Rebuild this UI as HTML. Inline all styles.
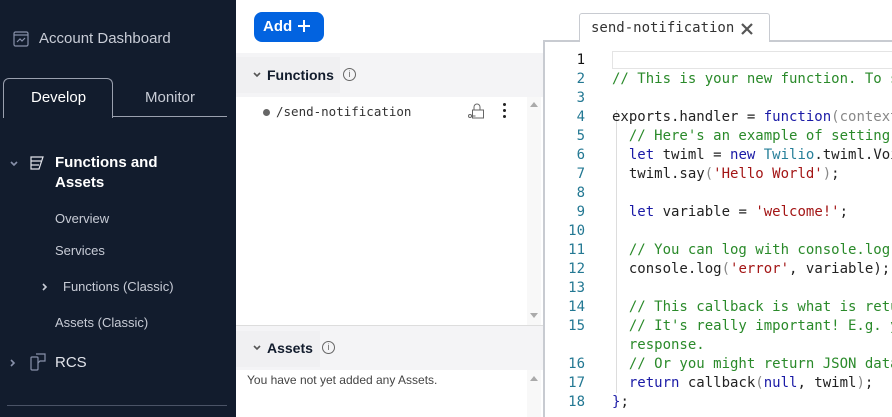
<!DOCTYPE html>
<html><head><meta charset="utf-8"><style>
*{margin:0;padding:0;box-sizing:border-box}
body{width:892px;height:417px;overflow:hidden;background:#fff;font-family:"Liberation Sans",sans-serif;position:relative}
.sb{position:absolute;left:0;top:0;width:236px;height:417px;background:#121c2d;color:#e1e3ea}
.abs{position:absolute}
.mono{font-family:"DejaVu Sans Mono",monospace}
.code{position:absolute;left:543px;top:40px;width:349px;height:377px;border-left:2px solid #c8cbd1;border-top:2px solid #c8cbd1;background:#fff}
.ln{position:absolute;left:543px;width:42px;text-align:right;font:14px "DejaVu Sans Mono",monospace;color:#237893}
.cl{position:absolute;left:612px;font:14px "DejaVu Sans Mono",monospace;color:#222;white-space:pre}
.c{color:#2a8a2a}.k{color:#1a1aa6}.s{color:#a31515}.g{color:#888}
</style></head><body>
<div class="sb">
 <svg class="abs" style="left:13px;top:31px" width="16" height="16" viewBox="0 0 16 16" fill="none" stroke="#8891aa" stroke-width="1.2"><rect x="1" y="1" width="14" height="14" rx="1.5"/><line x1="1" y1="4" x2="15" y2="4"/><path d="M4 11l3-3 2 2 3-3"/></svg>
 <div class="abs" style="left:39px;top:30px;font-size:15px;color:#c8ccd6">Account Dashboard</div>
 <div class="abs" style="left:3px;top:78px;width:110px;height:40px;border:1px solid #9aa0ae;border-bottom:none;border-radius:6px 6px 0 0"></div>
 <div class="abs" style="left:113px;top:116px;width:114px;border-top:1px solid #9aa0ae"></div>
 <div class="abs" style="left:31px;top:89px;font-size:15px;color:#fff">Develop</div>
 <div class="abs" style="left:145px;top:89px;font-size:15px;color:#c8ccd6">Monitor</div>
 <svg class="abs" style="left:9px;top:160px" width="10" height="8" viewBox="0 0 10 8" fill="none" stroke="#8891aa" stroke-width="1.6"><path d="M2 2l3 3 3-3"/></svg>
 <svg class="abs" style="left:29px;top:155px" width="16" height="16" viewBox="0 0 16 16" fill="none" stroke="#e1e3ea" stroke-width="1.2"><path d="M2 2h12l-4 12H2z M2 6h10 M2 10h8"/></svg>
 <div class="abs" style="left:55px;top:153px;font-size:15px;font-weight:bold;color:#fff;line-height:20px">Functions and<br>Assets</div>
 <div class="abs" style="left:55px;top:211px;font-size:13px;color:#c8ccd6">Overview</div>
 <div class="abs" style="left:55px;top:243px;font-size:13px;color:#c8ccd6">Services</div>
 <svg class="abs" style="left:41px;top:282px" width="8" height="10" viewBox="0 0 8 10" fill="none" stroke="#c8ccd6" stroke-width="1.6"><path d="M2 2l3 3-3 3"/></svg>
 <div class="abs" style="left:63px;top:279px;font-size:13px;color:#c8ccd6">Functions (Classic)</div>
 <div class="abs" style="left:55px;top:315px;font-size:13px;color:#c8ccd6">Assets (Classic)</div>
 <svg class="abs" style="left:9px;top:358px" width="8" height="10" viewBox="0 0 8 10" fill="none" stroke="#8891aa" stroke-width="1.6"><path d="M2 2l3 3-3 3"/></svg>
 <svg class="abs" style="left:30px;top:353px" width="16" height="18" viewBox="0 0 16 18" fill="none" stroke="#8891aa" stroke-width="1.2"><rect x="1" y="4" width="7" height="13" rx="1"/><path d="M6 1h9v7H10l-2 2"/></svg>
 <div class="abs" style="left:55px;top:354px;font-size:15px;color:#e1e3ea">RCS</div>
 <div class="abs" style="left:7px;top:405px;width:220px;border-top:1px solid #4a5366"></div>
</div>
<div class="abs" style="left:254px;top:12px;width:70px;height:30px;background:#0263e0;border-radius:8px;color:#fff;font-size:15px;font-weight:bold;padding:6px 0 0 9px">Add</div>
<svg class="abs" style="left:297px;top:19px" width="14" height="14" viewBox="0 0 14 14" stroke="#fff" stroke-width="2"><path d="M7 1v12M1 7h12"/></svg>
<div class="abs" style="left:236px;top:53px;width:307px;height:44px;background:#f4f4f6"></div>
<div class="abs" style="left:236px;top:57px;width:104px;height:36px;background:#f0f0f2"></div>
<svg class="abs" style="left:252px;top:71px" width="10" height="8" viewBox="0 0 10 8" fill="none" stroke="#555" stroke-width="1.6"><path d="M2 2l3 3 3-3"/></svg>
<div class="abs" style="left:267px;top:67px;font-size:14px;font-weight:bold;color:#121c2d">Functions</div>
<div class="abs" style="left:343px;top:68px;width:13px;height:13px;border:1px solid #666;border-radius:50%;font-size:9px;text-align:center;line-height:11px;color:#666">i</div>
<div class="abs" style="left:263px;top:109px;width:7px;height:7px;border-radius:50%;background:#666"></div>
<div class="abs mono" style="left:276px;top:104px;font-size:12.5px;color:#333">/send-notification</div>
<svg class="abs" style="left:467px;top:102px" width="18" height="18" viewBox="0 0 18 18" fill="none" stroke="#666" stroke-width="1"><path d="M7 8V5a3 3 0 016 0v3"/><rect x="5.5" y="8" width="11" height="8"/><circle cx="3" cy="14" r="1.5"/><path d="M4.5 14h4"/></svg>
<div class="abs" style="left:503px;top:103px;width:3px;line-height:5px;font-size:0"><div style="width:3px;height:3px;background:#222;margin-bottom:3px;border-radius:50%"></div><div style="width:3px;height:3px;background:#222;margin-bottom:3px;border-radius:50%"></div><div style="width:3px;height:3px;background:#222;border-radius:50%"></div></div>
<div class="abs" style="left:527px;top:97px;width:14px;height:228px;background:#f8f8f8"></div>
<div class="abs" style="left:530px;top:102px;width:0;height:0;border:4px solid transparent;border-bottom:5px solid #aaa;border-top:none"></div>
<div class="abs" style="left:530px;top:313px;width:0;height:0;border:4px solid transparent;border-top:5px solid #aaa;border-bottom:none"></div>
<div class="abs" style="left:236px;top:325px;width:307px;height:45px;background:#f4f4f6;border-top:1px solid #ddd"></div>
<div class="abs" style="left:236px;top:331px;width:84px;height:36px;background:#f0f0f2"></div>
<svg class="abs" style="left:252px;top:344px" width="10" height="8" viewBox="0 0 10 8" fill="none" stroke="#555" stroke-width="1.6"><path d="M2 2l3 3 3-3"/></svg>
<div class="abs" style="left:267px;top:340px;font-size:14px;font-weight:bold;color:#121c2d">Assets</div>
<div class="abs" style="left:322px;top:341px;width:13px;height:13px;border:1px solid #666;border-radius:50%;font-size:9px;text-align:center;line-height:11px;color:#666">i</div>
<div class="abs" style="left:247px;top:373px;font-size:12px;color:#444">You have not yet added any Assets.</div>
<div class="abs" style="left:527px;top:370px;width:14px;height:47px;background:#f8f8f8"></div>
<div class="abs" style="left:530px;top:376px;width:0;height:0;border:4px solid transparent;border-bottom:5px solid #aaa;border-top:none"></div>
<div class="code"></div>
<div class="abs" style="left:579px;top:13px;width:191px;height:29px;background:#fff;border:1px solid #c8cbd1;border-bottom:none;border-radius:3px 3px 0 0"></div>
<div class="abs mono" style="left:591px;top:20px;font-size:14px;color:#333">send-notification</div>
<svg class="abs" style="left:741px;top:23px" width="12" height="12" viewBox="0 0 12 12" stroke="#555" stroke-width="2.2"><path d="M1 1l10 10M11 1L1 11"/></svg>
<div class="abs" style="left:612px;top:51px;width:280px;height:18px;border:1px solid #e4e4e4;border-right:none"></div>
<div class="abs" style="left:616px;top:110px;height:283px;border-left:1px solid #ddd"></div>
<div class="ln" style="top:52px;color:#111">1</div><div class="ln" style="top:71px">2</div><div class="ln" style="top:90px">3</div><div class="ln" style="top:109px">4</div><div class="ln" style="top:128px">5</div><div class="ln" style="top:147px">6</div><div class="ln" style="top:166px">7</div><div class="ln" style="top:185px">8</div><div class="ln" style="top:204px">9</div><div class="ln" style="top:223px">10</div><div class="ln" style="top:242px">11</div><div class="ln" style="top:261px">12</div><div class="ln" style="top:280px">13</div><div class="ln" style="top:299px">14</div><div class="ln" style="top:318px">15</div><div class="ln" style="top:356px">16</div><div class="ln" style="top:375px">17</div><div class="ln" style="top:394px">18</div>
<div class="cl c" style="top:71px">// This is your new function. To see</div>
<div class="cl" style="top:109px">exports.handler = <span class="k">function</span><span class="g">(context</span></div>
<div class="cl c" style="top:128px">  // Here's an example of setting</div>
<div class="cl" style="top:147px">  <span class="k">let</span> twiml = <span class="k">new</span> <span style="color:#267f99">Twilio</span>.twiml.Voi</div>
<div class="cl" style="top:166px">  twiml.say<span class="g">(</span><span class="s">'Hello World'</span><span class="g">)</span>;</div>
<div class="cl" style="top:204px">  <span class="k">let</span> variable = <span class="s">'welcome!'</span>;</div>
<div class="cl c" style="top:242px">  // You can log with console.log</div>
<div class="cl" style="top:261px">  console.log<span class="g">(</span><span class="s">'error'</span>, variable);</div>
<div class="cl c" style="top:299px">  // This callback is what is retu</div>
<div class="cl c" style="top:318px">  // It's really important! E.g. y</div>
<div class="cl c" style="top:337px">  response.</div>
<div class="cl c" style="top:356px">  // Or you might return JSON data</div>
<div class="cl" style="top:375px">  <span class="k">return</span> callback<span class="g">(</span><span class="k">null</span>, twiml<span class="g">)</span>;</div>
<div class="cl" style="top:394px"><span class="k">}</span>;</div>
</body></html>
